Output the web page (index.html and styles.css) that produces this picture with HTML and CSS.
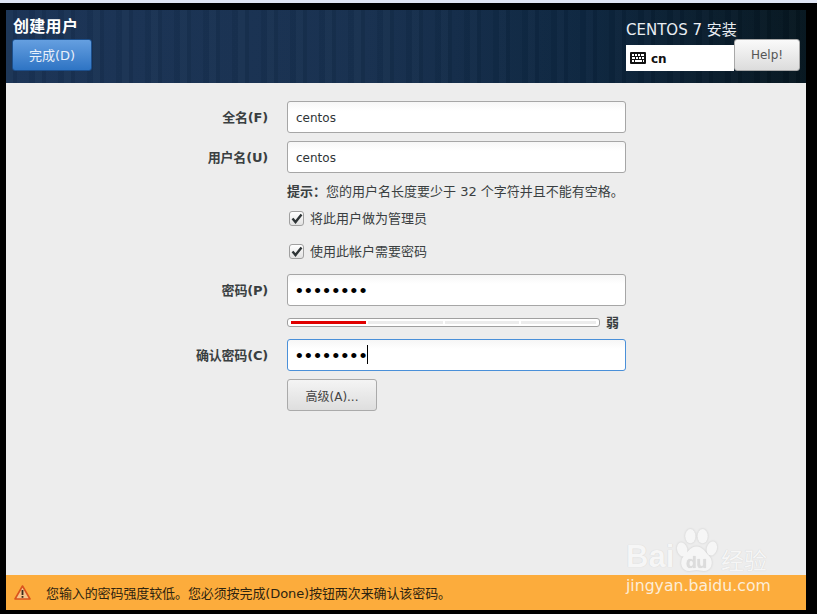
FILE: index.html
```html
<!DOCTYPE html>
<html lang="zh">
<head>
<meta charset="utf-8">
<title>创建用户</title>
<link rel="stylesheet" href="styles.css">
</head>
<body>
<div class="topstrip"></div>
<div class="window">
  <header class="header">
    <div class="header-left">
      <h1 class="title">创建用户</h1>
      <button class="btn-done">完成(D)</button>
    </div>
    <div class="header-right">
      <div class="product">CENTOS 7 安装</div>
      <div class="kb-row">
        <div class="kb">
          <svg class="kb-icon" width="16" height="12" viewBox="0 0 16 12"><path fill="#111" fill-rule="evenodd" d="M1 0h14a1 1 0 0 1 1 1v10a1 1 0 0 1-1 1H1a1 1 0 0 1-1-1V1a1 1 0 0 1 1-1zM2 2v2h2V2zM5 2v2h2V2zM8 2v2h2V2zM11 2v2h3V2zM2 5v2h3V5zM6 5v2h2V5zM9 5v2h2V5zM12 5v2h2V5zM2 8v2h2V8zM5 8v2h7V8zM13 8v2h1V8z"/></svg>
          <span class="kb-text">cn</span>
        </div>
        <button class="btn-help">Help!</button>
      </div>
    </div>
  </header>
  <main class="content">
    <form class="form">
      <label class="label">全名(F)</label>
      <div class="input">centos</div>
      <label class="label">用户名(U)</label>
      <div class="input">centos</div>
      <div class="hint"><b>提示：</b>您的用户名长度要少于 32 个字符并且不能有空格。</div>
      <div class="check check-a"><span class="box"><svg width="12" height="11" viewBox="0 0 12 11"><path d="M1.500 5.500 4.500 9 10.500 1.500" fill="none" stroke="#2e3436" stroke-width="2.400"/></svg></span>将此用户做为管理员</div>
      <div class="check check-b"><span class="box"><svg width="12" height="11" viewBox="0 0 12 11"><path d="M1.500 5.500 4.500 9 10.500 1.500" fill="none" stroke="#2e3436" stroke-width="2.400"/></svg></span>使用此帐户需要密码</div>
      <label class="label label-pw">密码(P)</label>
      <div class="input input-pw input-gap">••••••••</div>
      <div class="strength-row">
        <div class="meter">
          <span class="seg seg-on"></span><span class="seg"></span><span class="seg"></span><span class="seg"></span>
        </div>
        <span class="strength-text">弱</span>
      </div>
      <label class="label">确认密码(C)</label>
      <div class="input input-pw input-focus">••••••••<span class="caret"></span></div>
      <button class="btn-adv" type="button">高级(A)...</button>
    </form>
  </main>
  <footer class="warning">
    <svg class="warn-icon" width="17" height="15" viewBox="0 0 17 15"><path d="M8.500 1 16 14H1z" fill="#f6c48a" stroke="#d9531e" stroke-width="1.600" stroke-linejoin="round"/><rect x="7.600" y="5" width="1.800" height="5" fill="#3a2a1a"/><rect x="7.600" y="11" width="1.800" height="1.800" fill="#3a2a1a"/></svg>
    <span>您输入的密码强度较低。您必须按完成(Done)按钮两次来确认该密码。</span>
  </footer>
</div>
<div class="watermark">
  <div class="wm-line">
    <span class="wm-bai">Bai</span>
    <svg class="wm-paw" width="45" height="47" viewBox="0 0 44 46"><g fill="#f6f6f6"><ellipse cx="8" cy="22" rx="5" ry="7" transform="rotate(-15 8 22)"/><ellipse cx="16" cy="9" rx="5" ry="7"/><ellipse cx="28" cy="9" rx="5" ry="7"/><ellipse cx="37" cy="21" rx="5" ry="7" transform="rotate(15 37 21)"/><path d="M22 19c6 0 9 6 13 10 4 5 2 14-6 14-3 0-5-1-7-1s-4 1-7 1c-8 0-10-9-6-14 4-4 7-10 13-10z"/></g><text class="wm-du" x="22" y="40" text-anchor="middle">du</text></svg>
    <span class="wm-cn">经验</span>
  </div>
  <div class="wm-url">jingyan.baidu.com</div>
</div>
</body>
</html>
```
FILE: styles.css
```css
* { box-sizing: border-box; }
html, body { margin: 0; padding: 0; }
body {
  width: 817px; height: 614px; overflow: hidden; background: #000;
  position: relative;
  font-family: "Liberation Sans", "Noto Sans CJK SC", sans-serif;
  color: #2e3436; font-size: 13px;
}
.topstrip { height: 3px; background: #e0e6f5; }
.window { margin: 7px 11px 0 6px; height: 600px; display: flex; flex-direction: column; background: #ededed; }
.header {
  height: 73px; flex: none; display: flex; justify-content: space-between;
  padding: 6px 6px 0 6px; color: #fff;
  background:
    repeating-linear-gradient(90deg, rgba(255,255,255,.018) 0 7px, rgba(0,0,0,.05) 7px 11px, rgba(255,255,255,.01) 11px 23px, rgba(0,0,0,.035) 23px 29px),
    linear-gradient(90deg, #1a3355 0%, #17304f 45%, #0d2640 72%, #06161f 100%);
}
.title { margin: 0 0 4px 1px; font-size: 16px; font-weight: bold; line-height: 19px; font-family: "Noto Sans CJK SC", sans-serif; letter-spacing: .3px; }
.btn-done {
  display: block; width: 80px; height: 32px; padding: 0 0 2px; border: 1px solid #1c4f8c; border-radius: 3px;
  background: linear-gradient(#659fe0, #2e74c4); color: #e8f0fa; font: 13px "DejaVu Sans", "Noto Sans CJK SC", sans-serif;
}
.header-right { display: flex; flex-direction: column; width: 174px; }
.product { font: 15px/28px "DejaVu Sans", "Noto Sans CJK SC", sans-serif; height: 23px; color: #e9edf2; }
.kb-row { display: flex; height: 32px; }
.kb { width: 108px; height: 26px; margin-top: 6px; background: #fff; display: flex; align-items: center; gap: 5px; padding-left: 4px; color: #111; }
.kb-text { font: bold 12px "DejaVu Sans", sans-serif; padding-top: 1px; }
.btn-help {
  width: 66px; height: 32px; padding: 0; border: 1px solid #a8a8a8; border-radius: 3px;
  background: linear-gradient(#fafafa, #dcdcdc); color: #555; font: 12px "DejaVu Sans", sans-serif;
}
.content { flex: 1; min-height: 0; }
.form {
  display: grid; grid-template-columns: 262px 339px; column-gap: 19px; row-gap: 8px;
  padding-top: 18px; align-items: center; grid-auto-rows: min-content;
}
.label { text-align: right; font: bold 13px/16px "DejaVu Sans", "Noto Sans CJK SC", sans-serif; color: #3a3f41; letter-spacing: -.2px; padding-top: 2px; }
.input {
  height: 32px; border: 1px solid #a6a6a6; border-radius: 3px; background: linear-gradient(#f6f6f6, #fff 30%);
  padding: 1px 0 0 8px; font: 12px/31px "DejaVu Sans", sans-serif; color: #2e3436;
}
.input-pw { padding-top: 0; font: 19px/31px "Liberation Sans", sans-serif; color: #000; letter-spacing: 2.450px; display: flex; }
.input-focus { border-color: #4a90d9; }
.caret { width: 1px; height: 19px; background: #000; margin: 5px 0 0 -2px; }
.hint { grid-column: 2; font: 13px/16px "DejaVu Sans", "Noto Sans CJK SC", sans-serif; color: #3a3f41; height: 16px; margin-top: 3px; white-space: nowrap; }
.check { grid-column: 2; display: flex; align-items: center; gap: 6px; margin-left: 2px; font: 13px/16px "Noto Sans CJK SC", sans-serif; color: #3a3f41; height: 16px; }
.check-a { margin-top: 2px; }
.check-b { margin-top: 9px; }
.box { width: 15px; height: 15px; border: 1px solid #a0a0a0; border-radius: 3px; background: linear-gradient(#fff, #e2e2e2); display: flex; align-items: center; justify-content: center; }
.label-pw, .input-gap { margin-top: 7px; }
.strength-row { grid-column: 2; display: flex; align-items: center; gap: 6px; height: 14px; margin-top: 1px; margin-bottom: 2px; }
.meter { width: 313px; height: 9px; border: 1px solid #a0a0a0; border-radius: 3px; background: #fff; display: flex; gap: 2px; padding: 2px 3px; }
.seg { flex: 1; background: #ececec; }
.seg-on { background: #e00000; }
.strength-text { font: bold 13px/14px "Noto Sans CJK SC", sans-serif; color: #3a3f41; }
.btn-adv {
  grid-column: 2; width: 90px; height: 32px; padding: 0; border: 1px solid #aaa; border-radius: 3px;
  background: linear-gradient(#f4f4f4, #dedede); color: #444; font: 12px "DejaVu Sans", "Noto Sans CJK SC", sans-serif;
}
.warning { height: 35px; flex: none; background: #fcac3c; display: flex; align-items: center; gap: 15px; padding: 0 0 0 8px; font: 13px "DejaVu Sans", "Noto Sans CJK SC", sans-serif; color: #2e2410; letter-spacing: -.1px; }
.watermark { position: absolute; left: 626px; top: 527px; width: 180px; color: #f6f6f6; }
.wm-line { display: flex; align-items: flex-end; height: 47px; text-shadow: 0 0 1px rgba(0,0,0,.15); }
.wm-bai { font: bold 31px/32px "Liberation Sans", sans-serif; width: 48px; margin-bottom: 1px; }
.wm-paw { flex: none; filter: drop-shadow(0 0 1px rgba(0,0,0,.15)); }
.wm-du { font: bold 17px "Liberation Sans", sans-serif; fill: #dcdcdc; }
.wm-cn { font: 23px/30px "Noto Sans CJK SC", sans-serif; margin-left: 2px; white-space: nowrap; }
.wm-url { font: 15.700px/20px "DejaVu Sans", sans-serif; margin-top: 2px; white-space: nowrap; color: #fdeed8; }
```
